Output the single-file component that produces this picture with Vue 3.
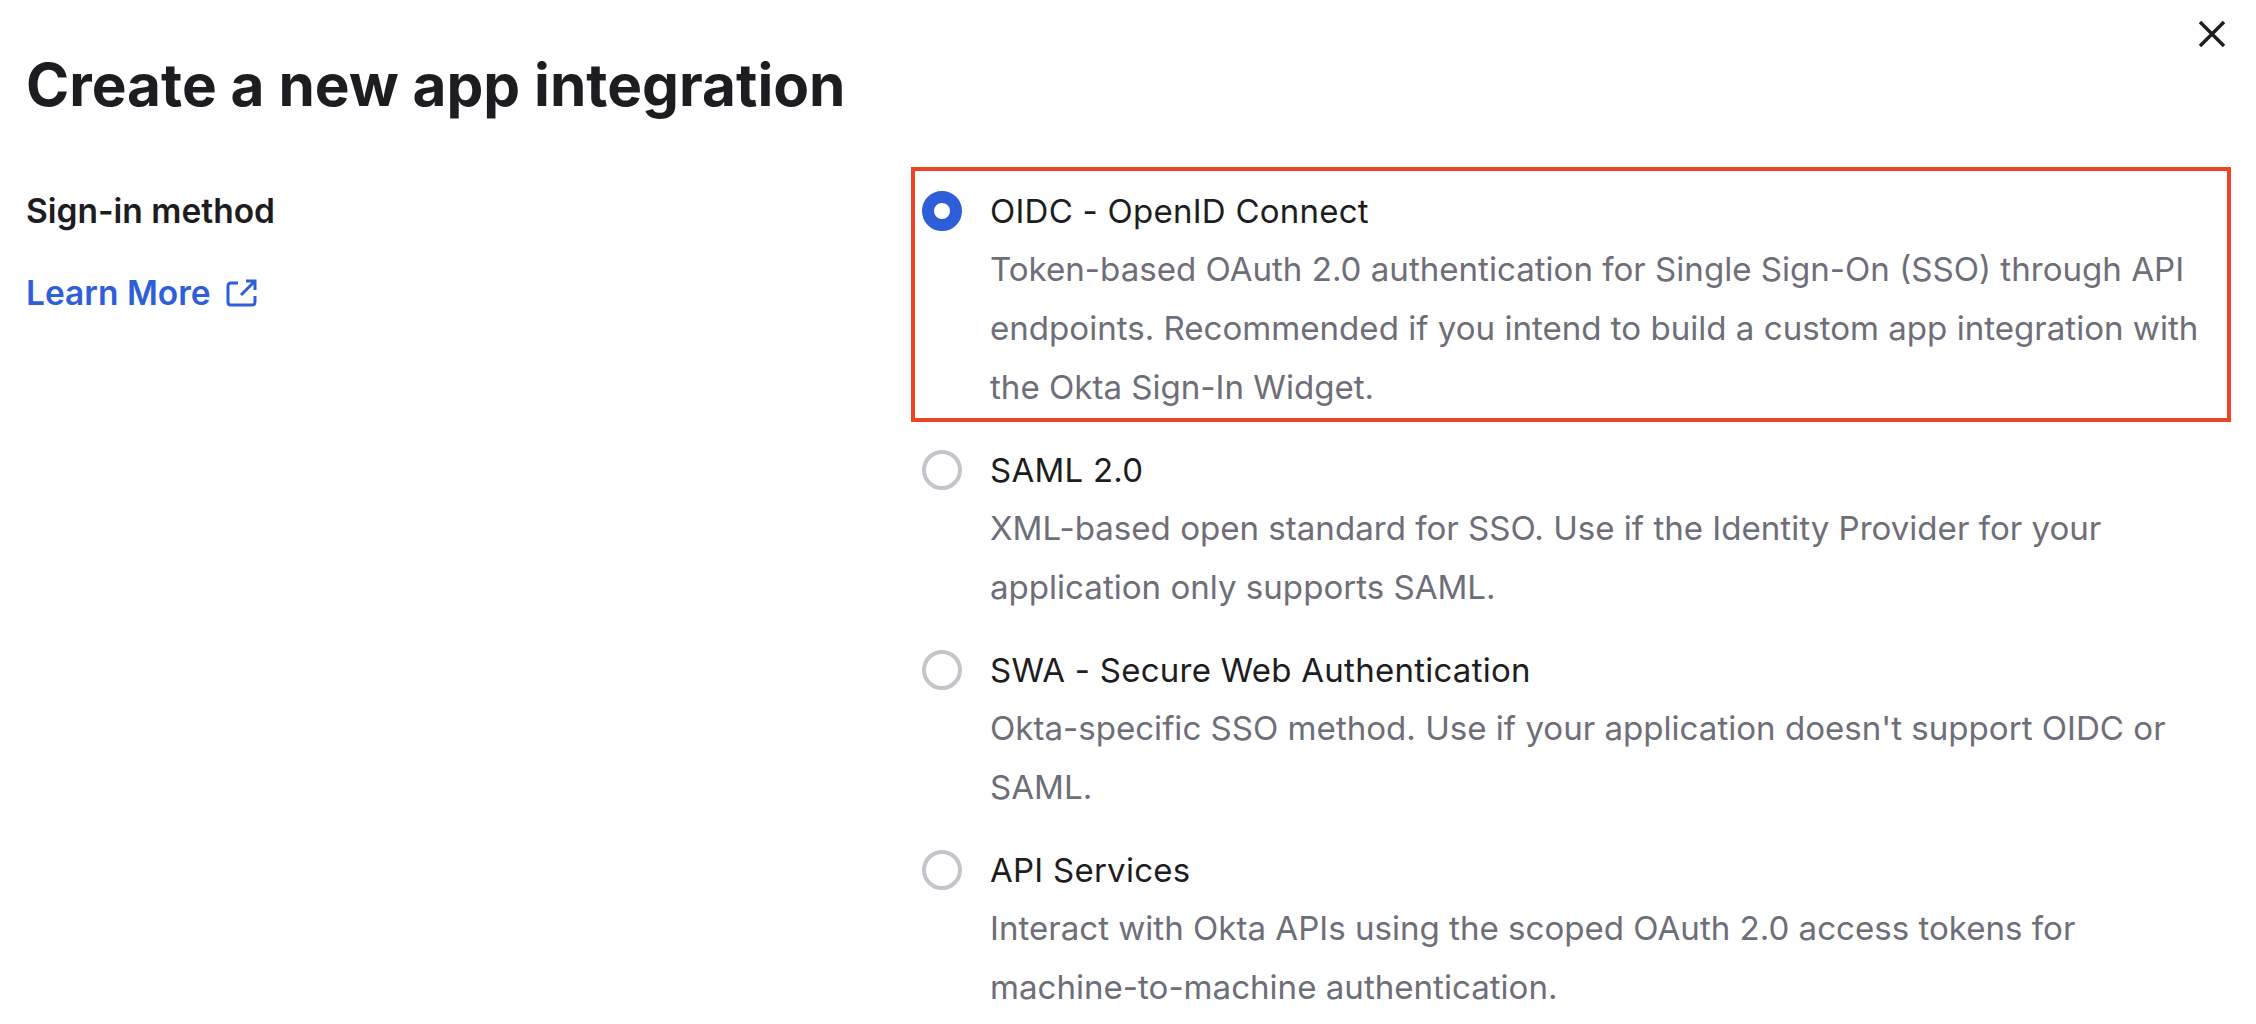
<script setup>
const options = [
  {
    id: 'oidc',
    title: 'OIDC - OpenID Connect',
    lines: [
      'Token-based OAuth 2.0 authentication for Single Sign-On (SSO) through API',
      'endpoints. Recommended if you intend to build a custom app integration with',
      'the Okta Sign-In Widget.'
    ],
    selected: true
  },
  {
    id: 'saml',
    title: 'SAML 2.0',
    lines: [
      'XML-based open standard for SSO. Use if the Identity Provider for your',
      'application only supports SAML.'
    ]
  },
  {
    id: 'swa',
    title: 'SWA - Secure Web Authentication',
    lines: [
      "Okta-specific SSO method. Use if your application doesn't support OIDC or",
      'SAML.'
    ]
  },
  {
    id: 'api',
    title: 'API Services',
    lines: [
      'Interact with Okta APIs using the scoped OAuth 2.0 access tokens for',
      'machine-to-machine authentication.'
    ]
  }
]
</script>

<template>
  <main class="dialog">
    <button class="close" aria-label="Close">
      <svg width="28" height="28" viewBox="0 0 28 28" fill="none" stroke="#1d1d21" stroke-width="3.4">
        <path d="M2 2 L26 26 M26 2 L2 26" />
      </svg>
    </button>

    <h1>Create a new app integration</h1>

    <div class="body">
      <div class="side">
        <div class="label">Sign-in method</div>
        <a class="learn">
          Learn More
          <svg width="31" height="28" viewBox="0 0 31 28" fill="none" stroke="#2f5fd8" stroke-width="3">
            <path d="M12 4 H5 Q2 4 2 7 V23 Q2 26 5 26 H26 Q29 26 29 23 V17" />
            <path d="M15 16 L28 3 M20 2 H29 V11" />
          </svg>
        </a>
      </div>

      <div class="options">
        <div v-for="opt in options" :key="opt.id" class="option" :class="{ highlighted: opt.selected }">
          <span class="radio" :class="{ on: opt.selected }"></span>
          <div class="text">
            <div class="title">{{ opt.title }}</div>
            <div v-for="line in opt.lines" :key="line" class="desc">{{ line }}</div>
          </div>
        </div>
      </div>
    </div>
  </main>
</template>

<style scoped>
.dialog {
  position: relative;
  width: 2256px;
  height: 1024px;
  box-sizing: border-box;
  padding: 50px 25px 0 26px;
  overflow: hidden;
  background: #fff;
  font-family: Inter, "Liberation Sans", sans-serif;
}

.close {
  position: absolute;
  top: 20px;
  left: 2198px;
  padding: 0;
  border: none;
  background: none;
  line-height: 0;
}

h1 {
  margin: 0;
  font-size: 58.5px;
  line-height: 70px;
  font-weight: 700;
  color: #1d1d21;
}

.body {
  display: flex;
  margin-top: 47px;
}

.side {
  width: 885px;
  flex: none;
  padding-top: 24px;
}

.label {
  font-size: 33.5px;
  line-height: 40px;
  font-weight: 600;
  color: #1d1d21;
}

.learn {
  display: flex;
  align-items: center;
  gap: 15px;
  margin-top: 42px;
  font-size: 33.5px;
  line-height: 40px;
  font-weight: 600;
  color: #2f5fd8;
}

.options {
  width: 1320px;
  display: flex;
  flex-direction: column;
  gap: 33px;
}

.option {
  display: flex;
  gap: 28px;
  padding: 0 0 0 11px;
}

.option.highlighted {
  box-sizing: border-box;
  height: 255px;
  margin-bottom: -5px;
  padding: 20px 0 0 7px;
  border: 4px solid #ee4426;
}

.radio {
  flex: none;
  box-sizing: border-box;
  width: 40px;
  height: 40px;
  border: 4px solid #c4c5cb;
  border-radius: 50%;
}

.radio.on {
  border: 12px solid #2f5fd8;
}

.title {
  font-size: 33px;
  line-height: 40px;
  letter-spacing: 0.25px;
  color: #1d1d21;
}

.desc {
  font-size: 33.1px;
  line-height: 59px;
  color: #6e6e78;
}

.title + .desc {
  margin-top: 9px;
}
</style>
